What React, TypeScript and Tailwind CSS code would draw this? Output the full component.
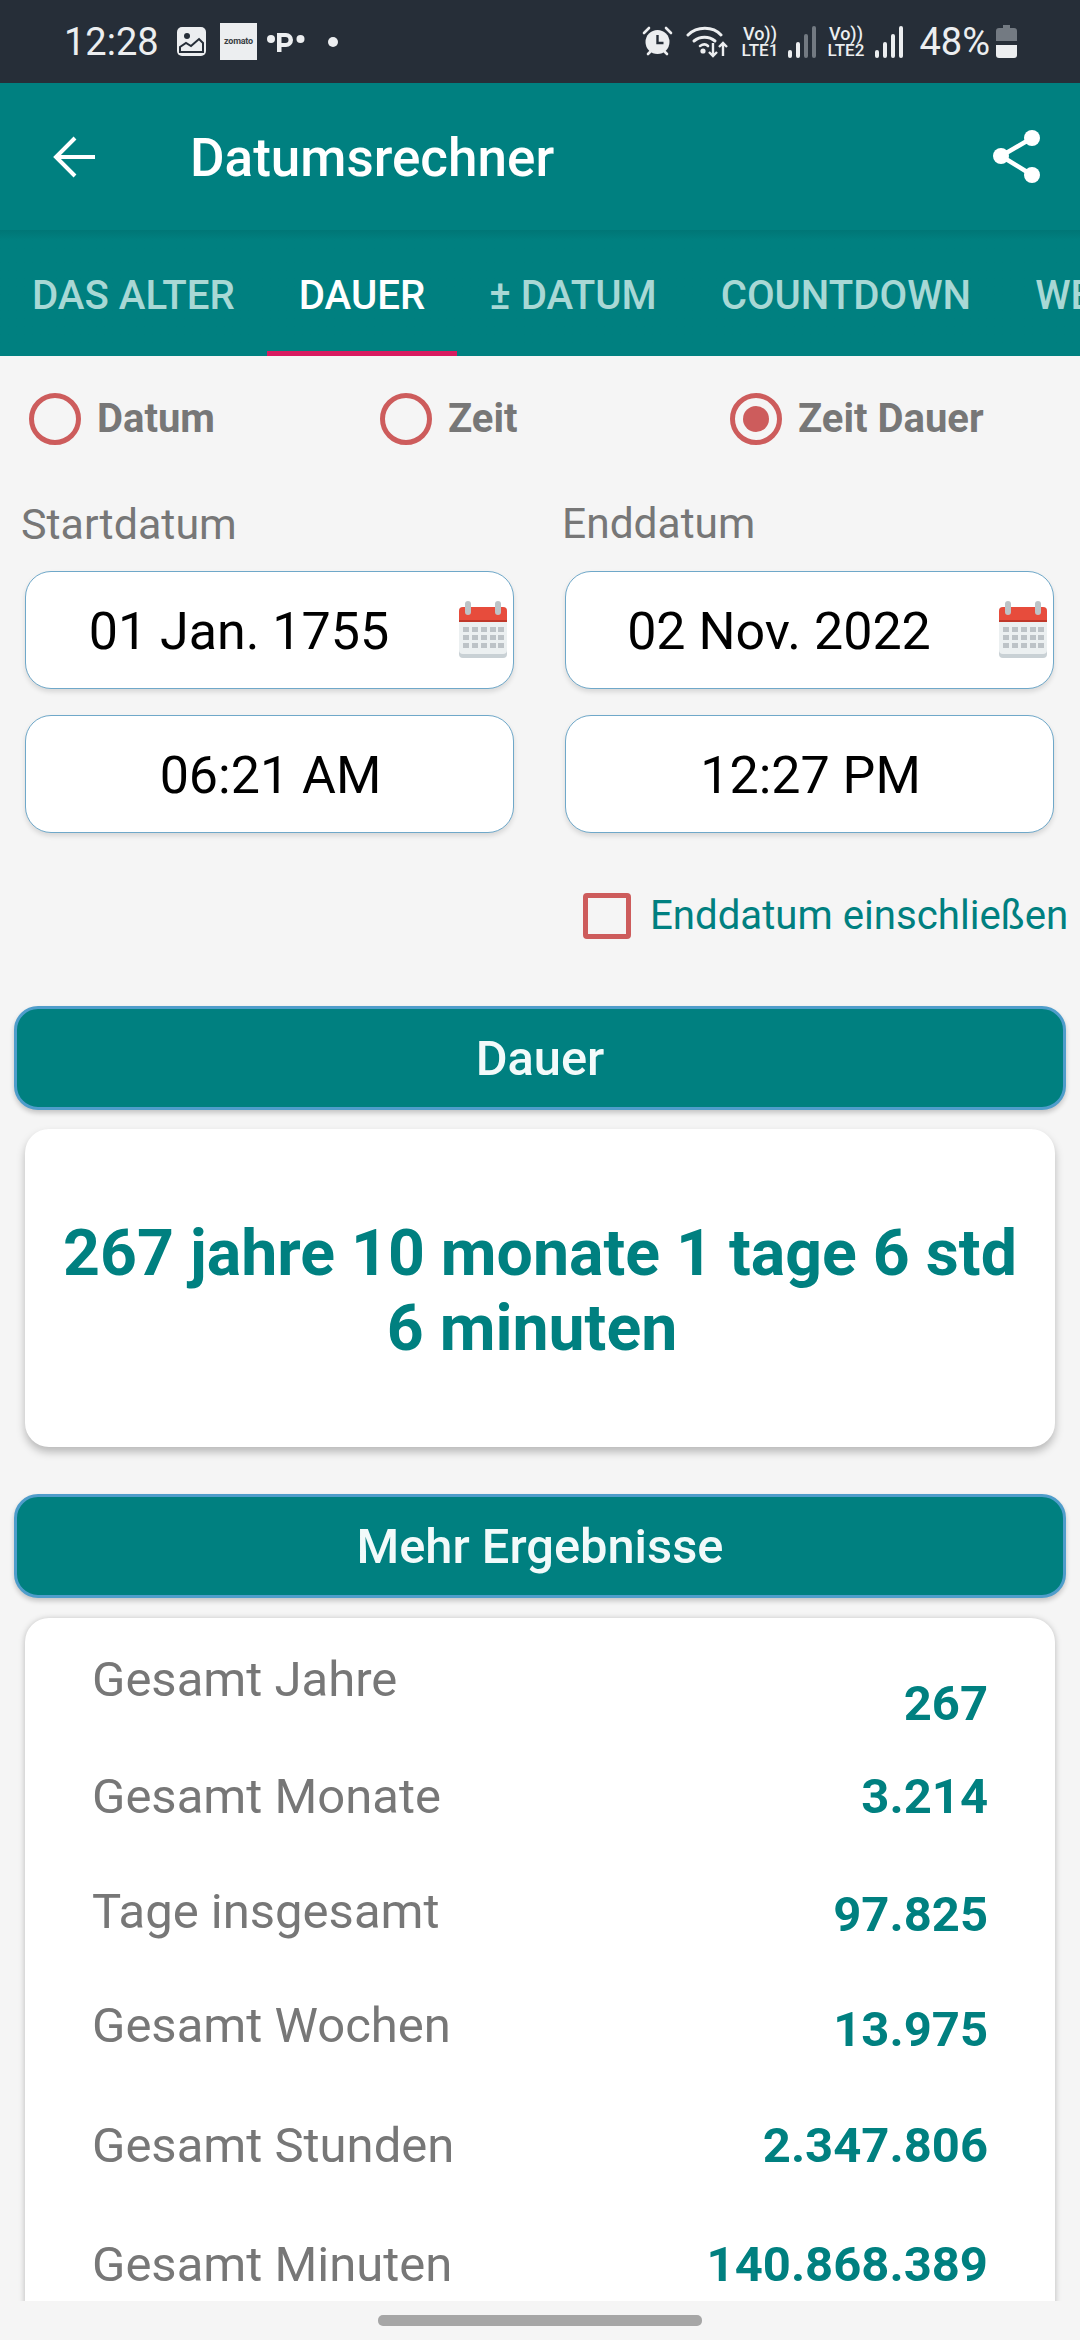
import React from 'react';

const resultRows = [
  { label: 'Gesamt Jahre', value: '267', rowClass: 'h-[117px]', valueClass: 'mt-[24px]' },
  { label: 'Gesamt Monate', value: '3.214', rowClass: 'h-[115px]', valueClass: 'mt-[0px]' },
  { label: 'Tage insgesamt', value: '97.825', rowClass: 'h-[114px]', valueClass: 'mt-[3px]' },
  { label: 'Gesamt Wochen', value: '13.975', rowClass: 'h-[120px]', valueClass: 'mt-[4px]' },
  { label: 'Gesamt Stunden', value: '2.347.806', rowClass: 'h-[119px]', valueClass: 'mt-[0px]' },
  { label: 'Gesamt Minuten', value: '140.868.389', rowClass: 'h-[80px]', valueClass: 'mt-[0px]' },
];

const CalendarIcon = () => (
  <svg width="50" height="58" viewBox="0 0 50 58" className="shrink-0">
    <rect x="1" y="6" width="48" height="51" rx="4" fill="#c9d1d5" />
    <rect x="1" y="6" width="48" height="47" rx="4" fill="#ecf0f1" />
    <path d="M1 21V10a4 4 0 0 1 4-4h40a4 4 0 0 1 4 4v11z" fill="#e74c3c" />
    <rect x="1" y="19" width="48" height="2" fill="#c0392b" />
    <rect x="7" y="0" width="6" height="14" rx="3" fill="#bdc3c7" />
    <rect x="37" y="0" width="6" height="14" rx="3" fill="#bdc3c7" />
    {[26, 34, 42].map((y) =>
      [5, 14, 23, 32, 40].map((x) => <rect key={`${x}-${y}`} x={x} y={y} width="6" height="5" fill="#bdc3c7" />)
    )}
  </svg>
);

const Radio = ({ label, checked }: { label: string; checked?: boolean }) => (
  <div className="flex items-center">
    <div className="w-[52px] h-[52px] rounded-full border-[5px] border-[#cd5c5c] flex items-center justify-center shrink-0">
      {checked && <div className="w-[26px] h-[26px] rounded-full bg-[#cd5c5c]" />}
    </div>
    <span className="ml-[16px] text-[40px] leading-[52px] font-bold text-[#777777]">{label}</span>
  </div>
);

const Field = ({ text, calendar }: { text: string; calendar?: boolean }) => (
  <div className="h-[118px] w-[489px] flex items-center rounded-[26px] border border-[#6fa8c9] bg-white shadow-[0_3px_5px_rgba(0,0,0,0.12)]">
    <span className={`flex-1 text-center text-[52px] leading-[60px] pt-[4px] text-black ${calendar ? 'pr-[6px]' : 'pl-[2px]'}`}>{text}</span>
    {calendar && <div className="mr-[5px]"><CalendarIcon /></div>}
  </div>
);

const TealButton = ({ text }: { text: string }) => (
  <div className="mx-[14px] h-[104px] rounded-[24px] border-[3px] border-[#4f9dcb] bg-[#008080] flex items-center justify-center shadow-[0_3px_5px_rgba(0,0,0,0.2)]">
    <span className="text-[48.8px] pt-[2px] font-medium text-[#f2fafa]">{text}</span>
  </div>
);

const SignalBars = ({ dim }: { dim?: boolean }) => (
  <svg width="28" height="32" viewBox="0 0 28 32">
    <rect x="0" y="24" width="4" height="8" rx="2" fill="#eceef0" />
    <rect x="8" y="16" width="4" height="16" rx="2" fill="#eceef0" />
    <rect x="16" y="8" width="4" height="24" rx="2" fill={dim ? '#737a82' : '#eceef0'} />
    <rect x="24" y="0" width="4" height="32" rx="2" fill={dim ? '#737a82' : '#eceef0'} />
  </svg>
);

const VoLte = ({ text }: { text: string }) => (
  <div className="flex flex-col items-center text-[#eceef0] font-medium w-[41px]">
    <span className="text-[18px] leading-[17px]">Vo))</span>
    <span className="text-[17px] leading-[16px]">{text}</span>
  </div>
);

const StatusBar = () => (
  <div className="h-[83px] bg-[#262e38] flex items-center pl-[64px] pr-[63px] text-[#eceef0]">
    <span className="text-[38px] leading-none w-[113px]">12:28</span>
    <svg width="29" height="29" viewBox="0 0 29 29">
      <rect width="29" height="29" rx="5" fill="#eceef0" />
      <circle cx="10" cy="9" r="3" fill="#262e38" />
      <path d="M3 25v-5l6-4 5 3 8-7 4 4v9z" fill="none" stroke="#262e38" strokeWidth="2" />
    </svg>
    <div className="ml-[14px] w-[37px] h-[37px] bg-[#eceef0] flex items-center justify-center">
      <span className="text-[9px] font-bold text-[#3a3f45] tracking-tight">zomato</span>
    </div>
    <svg width="38" height="22" viewBox="0 0 38 22" className="ml-[10px]">
      <circle cx="4" cy="8" r="4" fill="#eceef0" />
      <path d="M10 2h9a7 7 0 0 1 0 14h-4.5v5H10zM14.5 6v6h4a3 3 0 0 0 0-6z" fill="#eceef0" fillRule="evenodd" />
      <circle cx="33.5" cy="8" r="4" fill="#eceef0" />
    </svg>
    <div className="ml-[23px] w-[10px] h-[10px] rounded-full bg-[#eceef0]" />
    <div className="flex-1" />
    <svg width="31" height="31" viewBox="0 0 31 31">
      <circle cx="15.5" cy="16" r="12" fill="#eceef0" />
      <path d="M15.5 9v8h6" fill="none" stroke="#262e38" strokeWidth="2.4" />
      <path d="M2 7l5-5M29 7l-5-5M6 28l3-3M25 28l-3-3" stroke="#eceef0" strokeWidth="2.6" strokeLinecap="round" />
    </svg>
    <svg width="42" height="32" viewBox="0 0 42 32" className="ml-[13px]">
      <path d="M2 9c9-9 25-9 33 0" fill="none" stroke="#eceef0" strokeWidth="3" strokeLinecap="round" />
      <path d="M8 15c6-5 15-5 21 0" fill="none" stroke="#eceef0" strokeWidth="3" strokeLinecap="round" />
      <path d="M14 20c3-2 6-2 8 0" fill="none" stroke="#eceef0" strokeWidth="2.6" strokeLinecap="round" />
      <circle cx="17" cy="25" r="2.6" fill="#eceef0" />
      <path d="M27 17v13M23 26l4 4 4-4M37 30V17M33 21l4-4 4 4" fill="none" stroke="#eceef0" strokeWidth="2.4" />
    </svg>
    <div className="ml-[11px]"><VoLte text="LTE1" /></div>
    <div className="ml-[8px]"><SignalBars dim /></div>
    <div className="ml-[9px]"><VoLte text="LTE2" /></div>
    <div className="ml-[9px]"><SignalBars /></div>
    <span className="ml-[16px] text-[38px] leading-none">48%</span>
    <svg width="21" height="33" viewBox="0 0 21 33" className="ml-[6px]">
      <path d="M7 0h7v3h4a3 3 0 0 1 3 3v10H0V6a3 3 0 0 1 3-3h4z" fill="#737a82" />
      <path d="M0 20h21v10a3 3 0 0 1-3 3H3a3 3 0 0 1-3-3z" fill="#eceef0" />
    </svg>
  </div>
);

const AppBar = () => (
  <div className="h-[147px] bg-[#008080] flex items-center pl-[53px] pr-[40px]">
    <svg width="42" height="42" viewBox="0 0 42 42" className="shrink-0">
      <path d="M42 21H3M22 2L3 21l19 19" fill="none" stroke="#ffffff" strokeWidth="4" />
    </svg>
    <span className="ml-[95px] text-[53px] leading-[64px] pt-[2px] font-medium text-white flex-1">Datumsrechner</span>
    <svg width="47" height="53" viewBox="0 0 47 53">
      <path d="M39 8L8 26l31 19" fill="none" stroke="#ffffff" strokeWidth="4.5" />
      <circle cx="39" cy="8" r="8" fill="#ffffff" />
      <circle cx="8" cy="26" r="8" fill="#ffffff" />
      <circle cx="39" cy="45" r="8" fill="#ffffff" />
    </svg>
  </div>
);

const tabs = ['DAS ALTER', 'DAUER', '± DATUM', 'COUNTDOWN', 'WERKTAGE'];

const TabBar = () => (
  <div className="h-[126px] flex overflow-hidden bg-gradient-to-b from-[#007676] to-[#008080] to-[8%]">
    {tabs.map((tab) => {
      const active = tab === 'DAUER';
      return (
        <div
          key={tab}
          className={`px-[32px] pt-[12px] shrink-0 flex items-center border-b-[5px] text-[40.2px] font-medium ${
            active ? 'border-[#d81b60] text-white' : 'border-transparent text-[#a8d8d5]'
          }`}
        >
          {tab}
        </div>
      );
    })}
  </div>
);

export default function App() {
  return (
    <div className="w-[1080px] h-[2340px] bg-[#f5f5f5] flex flex-col overflow-hidden font-['Roboto',sans-serif]">
      <StatusBar />
      <AppBar />
      <TabBar />

      <div className="flex-1 min-h-0 overflow-hidden">
        <div className="grid grid-cols-[351px_350px_1fr] pl-[29px] pt-[37px]">
          <Radio label="Datum" />
          <Radio label="Zeit" />
          <Radio label="Zeit Dauer" checked />
        </div>

        <div className="grid grid-cols-2 mt-[56px]">
          <div className="pl-[21px]">
            <div className="text-[43px] leading-[46px] text-[#777777]">Startdatum</div>
            <div className="ml-[4px] mt-[24px] flex flex-col gap-[26px]">
              <Field text="01 Jan. 1755" calendar />
              <Field text="06:21 AM" />
            </div>
          </div>
          <div className="pl-[22px]">
            <div className="text-[42.5px] leading-[46px] text-[#777777]">Enddatum</div>
            <div className="ml-[3px] mt-[24px] flex flex-col gap-[26px]">
              <Field text="02 Nov. 2022" calendar />
              <Field text="12:27 PM" />
            </div>
          </div>
        </div>

        <div className="flex items-center pl-[583px] mt-[60px]">
          <div className="w-[48px] h-[46px] rounded-[4px] border-[5px] border-[#cd5c5c]" />
          <span className="ml-[19px] text-[40.2px] leading-[46px] text-[#008080] whitespace-nowrap">Enddatum einschließen</span>
        </div>

        <div className="mt-[67px]">
          <TealButton text="Dauer" />
        </div>

        <div className="mx-[25px] mt-[19px] h-[318px] rounded-[24px] bg-white shadow-[0_5px_9px_rgba(0,0,0,0.25)] flex flex-col items-center justify-center">
          <div className="text-[64.4px] leading-[75px] font-bold text-[#008080] whitespace-nowrap mt-[6px]">267 jahre 10 monate 1 tage 6 std</div>
          <div className="text-[64.4px] leading-[75px] font-bold text-[#008080] whitespace-nowrap pr-[16px]">6 minuten</div>
        </div>

        <div className="mt-[47px]">
          <TealButton text="Mehr Ergebnisse" />
        </div>

        <div className="mx-[25px] mt-[20px] px-[67px] pt-[36px] h-[700px] rounded-t-[24px] bg-white shadow-[0_1px_6px_rgba(0,0,0,0.25)]">
          {resultRows.map((row) => (
            <div key={row.label} className={`flex justify-between items-start ${row.rowClass}`}>
              <span className="text-[49px] leading-[52px] text-[#777777]">{row.label}</span>
              <span className={`text-[49px] leading-[52px] font-bold text-[#008080] ${row.valueClass}`}>{row.value}</span>
            </div>
          ))}
        </div>
      </div>

      <div className="h-[39px] shrink-0 bg-[#f5f5f5] relative z-10 flex justify-center pt-[14px]">
        <div className="w-[324px] h-[11px] rounded-[5px] bg-[#a6a6a6]" />
      </div>
    </div>
  );
}
